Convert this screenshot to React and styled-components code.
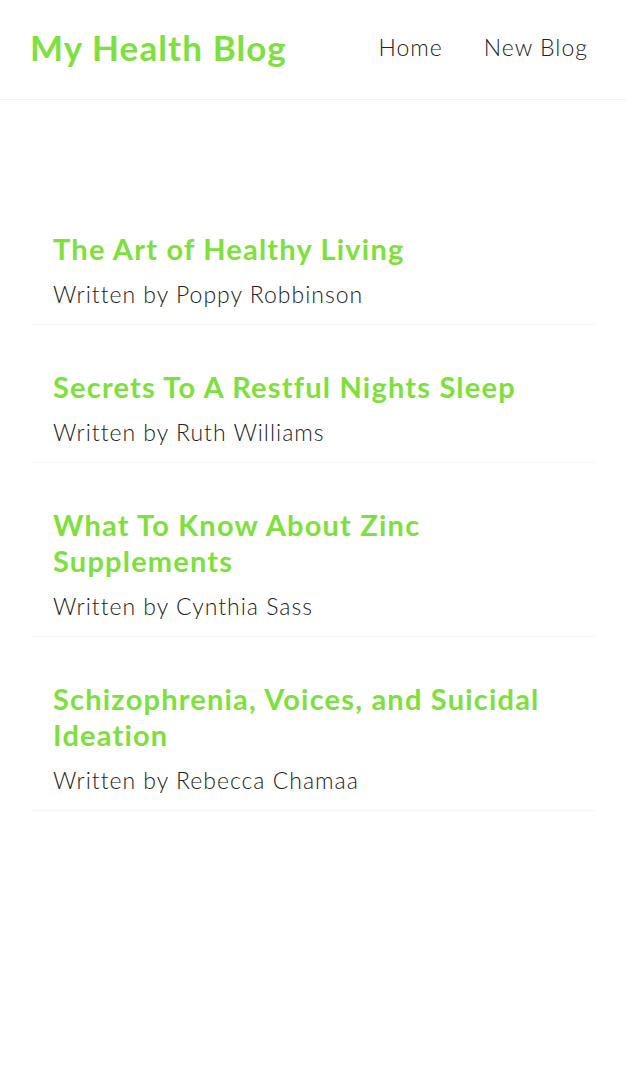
import React from "react";
import styled, { createGlobalStyle } from "styled-components";

const GlobalStyle = createGlobalStyle`
  html, body { margin: 0; padding: 0; background: #ffffff; }
  body {
    font-family: Lato, "Open Sans", sans-serif;
    color: #333333;
  }
  * { box-sizing: border-box; }
`;

const Navbar = styled.nav`
  display: flex;
  align-items: center;
  height: 100px;
  padding: 0 29px 5px 30px;
  border-bottom: 1px solid #f2f2f2;
`;

const Brand = styled.h1`
  margin: 0;
  font-size: 35px;
  font-weight: 700;
  letter-spacing: 1.1px;
  color: #7ee03c;
  line-height: 1.2;
`;

const Links = styled.div`
  margin-left: auto;
  display: flex;
  align-items: center;
`;

const NavLink = styled.a`
  margin-left: 23px;
  padding: 9px;
  font-size: 23px;
  font-weight: 300;
  letter-spacing: 1px;
  color: #222222;
  text-decoration: none;
`;

const Content = styled.main`
  padding: 116px 30px 40px;
`;

const Preview = styled.article`
  padding: 15px 23px;
  margin: 0 0 29px;
  border-bottom: 1px solid #f7f7f7;
`;

const Title = styled.h2`
  margin: 0 0 13px;
  font-size: 29px;
  line-height: 36px;
  font-weight: 700;
  letter-spacing: 1.2px;
  color: #7ee03c;
`;

const Author = styled.p`
  margin: 0;
  font-size: 23px;
  line-height: 29px;
  font-weight: 300;
  letter-spacing: 1px;
  color: #222222;
`;

const blogs = [
  { id: 1, title: "The Art of Healthy Living", author: "Poppy Robbinson" },
  { id: 2, title: "Secrets To A Restful Nights Sleep", author: "Ruth Williams" },
  { id: 3, title: "What To Know About Zinc Supplements", author: "Cynthia Sass" },
  { id: 4, title: "Schizophrenia, Voices, and Suicidal Ideation", author: "Rebecca Chamaa" },
];

export default function App() {
  return (
    <>
      <GlobalStyle />
      <Navbar>
        <Brand>My Health Blog</Brand>
        <Links>
          <NavLink href="#">Home</NavLink>
          <NavLink href="#">New Blog</NavLink>
        </Links>
      </Navbar>
      <Content>
        {blogs.map((b) => (
          <Preview key={b.id}>
            <Title>{b.title}</Title>
            <Author>Written by {b.author}</Author>
          </Preview>
        ))}
      </Content>
    </>
  );
}
